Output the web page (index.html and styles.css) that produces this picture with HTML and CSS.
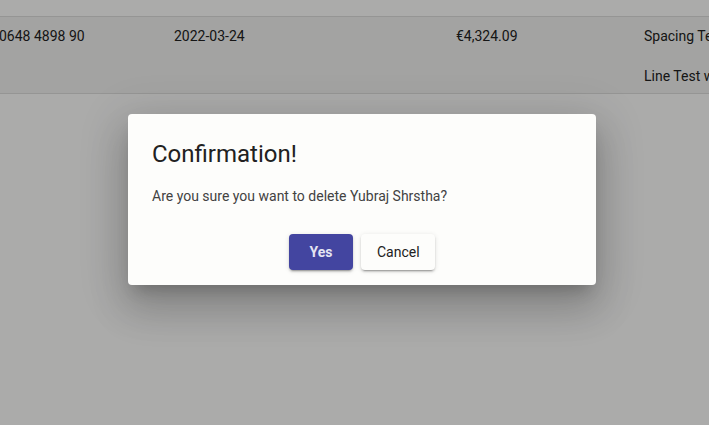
FILE: index.html
```html
<!DOCTYPE html>
<html>
<head>
<meta charset="utf-8">
<link rel="stylesheet" href="styles.css">
</head>
<body>
<div class="page">
  <div class="table">
    <div class="row">
      <div class="cell c1">0648 4898 90</div>
      <div class="cell c2">2022-03-24</div>
      <div class="cell c3">€4,324.09</div>
      <div class="cell c4"><div>Spacing Test</div><div class="l2">Line Test with text</div></div>
    </div>
  </div>
</div>
<div class="overlay">
  <div class="dialog">
    <h2 class="title">Confirmation!</h2>
    <p class="msg">Are you sure you want to delete Yubraj Shrstha?</p>
    <div class="actions">
      <button class="btn yes">Yes</button>
      <button class="btn cancel">Cancel</button>
    </div>
  </div>
</div>
</body>
</html>
```
FILE: styles.css
```css
html, body { margin: 0; padding: 0; }
body {
  width: 709px; height: 425px; overflow: hidden;
  background: #fdfdfb;
  font-family: Roboto, "Noto Sans", sans-serif;
  position: relative;
}
.page { padding-top: 16px; }
.row {
  display: grid;
  grid-template-columns: 174px 282px 188px 1fr;
  border-top: 1px solid #dcdcda;
  border-bottom: 1px solid #dcdcda;
  background: #f1f1ef;
  height: 76px;
  box-sizing: content-box;
  white-space: nowrap;
  overflow: hidden;
}
.cell {
  font-size: 14px; color: #212121;
  padding-top: 9px; line-height: 20px;
}
.c1 { margin-left: -1px; }
.l2 { margin-top: 20px; }
.overlay {
  position: absolute; inset: 0;
  background: rgba(0,0,0,0.32);
  padding: 114px 0 0 128px;
  box-sizing: border-box;
}
.dialog {
  width: 468px; height: 171px;
  box-sizing: border-box;
  background: #fdfdfb;
  border-radius: 4px;
  padding: 24px 24px 0;
  box-shadow: 0 11px 15px -7px rgba(0,0,0,.2), 0 24px 38px 3px rgba(0,0,0,.14), 0 9px 46px 8px rgba(0,0,0,.12);
}
.title {
  margin: 0;
  font-size: 24px; font-weight: 400; line-height: 32px;
  color: #212121;
}
.msg {
  margin: 16px 0 0;
  font-size: 14px; line-height: 20px; color: #424242;
}
.actions {
  display: flex; justify-content: center; gap: 8px;
  margin-top: 28px;
}
.btn {
  height: 36px; border: 0; border-radius: 4px;
  font-family: Roboto, sans-serif; font-size: 14px;
  padding: 0 16px;
}
.yes {
  width: 64px; background: #4345a0; color: #e4e4f2; font-weight: 700;
  box-shadow: 0 3px 1px -2px rgba(0,0,0,.2), 0 2px 2px 0 rgba(0,0,0,.14), 0 1px 5px 0 rgba(0,0,0,.12);
}
.cancel {
  width: 74px; background: #fdfdfb; color: #212121; font-weight: 400;
  box-shadow: 0 3px 1px -2px rgba(0,0,0,.2), 0 2px 2px 0 rgba(0,0,0,.14), 0 1px 5px 0 rgba(0,0,0,.12);
}
```
